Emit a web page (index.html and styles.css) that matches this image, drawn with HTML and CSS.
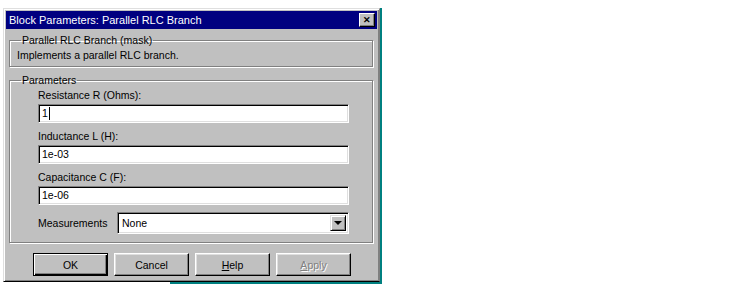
FILE: index.html
```html
<!DOCTYPE html>
<html lang="en">
<head>
    <meta charset="UTF-8">
    <title>Block Parameters: Parallel RLC Branch</title>
    <link rel="stylesheet" href="styles.css">
</head>
<body>
    <div class="window">
        <div class="titlebar">
            <span class="title">Block Parameters: Parallel RLC Branch</span>
            <span class="close">&#x2715;</span>
        </div>
        <div class="content">
            <fieldset class="group mask">
                <legend>Parallel RLC Branch (mask)</legend>
                <div class="desc">Implements a parallel RLC branch.</div>
            </fieldset>
            <fieldset class="group params">
                <legend>Parameters</legend>
                <div class="field">
                    <div class="lbl">Resistance R (Ohms):</div>
                    <div class="edit">1<span class="caret"></span></div>
                </div>
                <div class="field">
                    <div class="lbl">Inductance L (H):</div>
                    <div class="edit">1e-03</div>
                </div>
                <div class="field">
                    <div class="lbl">Capacitance C (F):</div>
                    <div class="edit">1e-06</div>
                </div>
                <div class="row">
                    <div class="lbl">Measurements</div>
                    <div class="combo">
                        <span class="combo-text">None</span>
                        <span class="arrow"><span class="tri"></span></span>
                    </div>
                </div>
            </fieldset>
            <div class="buttons">
                <div class="btn default"><span>OK</span></div>
                <div class="btn"><span>Cancel</span></div>
                <div class="btn"><span><u>H</u>elp</span></div>
                <div class="btn disabled"><span><u>A</u>pply</span></div>
            </div>
        </div>
    </div>
    <div class="desk"></div>
</body>
</html>
```

FILE: styles.css
```css
body{
    margin: 0;
    background: #fff;
    font-family: "Liberation Sans", Arial, sans-serif;
    font-size: 10.5px;
    color: #000;
}
.window{
    margin: 8px 0 0 3px;
    width: 377px;
    height: 274px;
    box-sizing: border-box;
    background: #c0c0c0;
    border-top: 1px solid #dfdfdf;
    border-left: 1px solid #dfdfdf;
    border-right: 1px solid #808080;
    border-bottom: 1px solid #000;
    box-shadow: inset 1px 1px 0 #fff, inset -1px -1px 0 #808080, 2px 0 0 #008080;
    padding: 2px;
}
.titlebar{
    height: 18px;
    background: #000080;
    color: #fff;
    display: flex;
    align-items: center;
    justify-content: space-between;
    padding: 0 2px 0 3px;
}
.title{
    font-size: 11px;
}
.close{
    width: 16px;
    height: 14px;
    box-sizing: border-box;
    background: #c0c0c0;
    color: #000;
    font-size: 9px;
    font-weight: bold;
    line-height: 12px;
    text-align: center;
    border-top: 1px solid #fff;
    border-left: 1px solid #fff;
    border-right: 1px solid #000;
    border-bottom: 1px solid #000;
    box-shadow: inset -1px -1px 0 #808080;
}
.content{
    padding: 5px 4px 0 3px;
}
.group{
    margin: 0;
    border: 1px solid #808080;
    box-shadow: 1px 1px 0 #fff, inset 1px 1px 0 #fff;
    width: 364px;
    box-sizing: border-box;
}
.group legend{
    padding: 0 1px;
    margin-left: 4px;
    line-height: 13px;
}
.mask{
    padding: 2px 7px 4px 7px;
}
.desc{
    line-height: 13px;
}
.params{
    margin-top: 7px;
    padding: 2px 23px 8px 28px;
}
.params legend{
    margin-left: -17px;
}
.lbl{
    line-height: 13px;
}
.field{
    margin-bottom: 7px;
}
.edit{
    margin-top: 2px;
    height: 19px;
    box-sizing: border-box;
    background: #fff;
    border-top: 1px solid #808080;
    border-left: 1px solid #808080;
    border-right: 1px solid #fff;
    border-bottom: 1px solid #fff;
    box-shadow: inset 1px 1px 0 #000, inset -1px -1px 0 #dfdfdf;
    padding: 2px 3px 0 3px;
    line-height: 13px;
    display: flex;
    align-items: flex-start;
}
.caret{
    display: inline-block;
    width: 1px;
    height: 13px;
    background: #000;
    margin-left: 1px;
}
.row{
    display: flex;
    align-items: center;
    justify-content: space-between;
}
.combo{
    width: 232px;
    height: 22px;
    box-sizing: border-box;
    background: #fff;
    border-top: 1px solid #808080;
    border-left: 1px solid #808080;
    border-right: 1px solid #fff;
    border-bottom: 1px solid #fff;
    box-shadow: inset 1px 1px 0 #000, inset -1px -1px 0 #dfdfdf;
    display: flex;
    align-items: center;
    justify-content: space-between;
    padding: 2px;
}
.combo-text{
    padding-left: 2px;
}
.arrow{
    width: 16px;
    height: 16px;
    box-sizing: border-box;
    background: #c0c0c0;
    border-top: 1px solid #dfdfdf;
    border-left: 1px solid #dfdfdf;
    border-right: 1px solid #000;
    border-bottom: 1px solid #000;
    box-shadow: inset 1px 1px 0 #fff, inset -1px -1px 0 #808080;
    display: flex;
    align-items: center;
    justify-content: center;
}
.tri{
    width: 0;
    height: 0;
    border-left: 4px solid transparent;
    border-right: 4px solid transparent;
    border-top: 4px solid #000;
}
.buttons{
    display: flex;
    justify-content: center;
    gap: 6px;
    margin-top: 10px;
    padding-left: 2px;
}
.btn{
    width: 75px;
    height: 23px;
    box-sizing: border-box;
    border-top: 1px solid #fff;
    border-left: 1px solid #fff;
    border-right: 1px solid #000;
    border-bottom: 1px solid #000;
    box-shadow: inset -1px -1px 0 #808080, inset 1px 1px 0 #dfdfdf;
    display: flex;
    align-items: center;
    justify-content: center;
}
.btn.default{
    border: 1px solid #000;
    box-shadow: inset 1px 1px 0 #fff, inset -1px -1px 0 #000, inset -2px -2px 0 #808080;
}
.btn.disabled{
    color: #808080;
    text-shadow: 1px 1px 0 #fff;
}
.desk{
    margin-left: 170px;
    width: 212px;
    height: 2px;
    background: #008080;
}
```
